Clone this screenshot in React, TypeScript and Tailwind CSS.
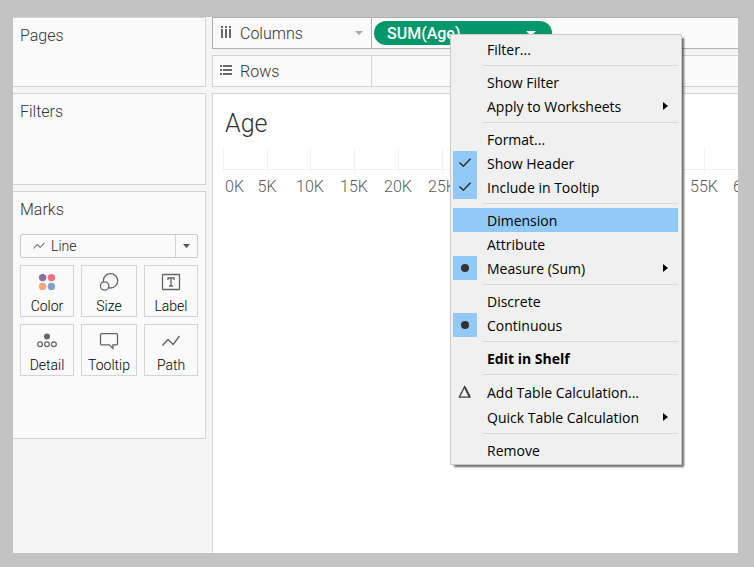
import type { ReactNode } from "react";

const CheckMark = () => (
  <svg width="14" height="12" viewBox="0 0 14 12" fill="none" stroke="#333" strokeWidth="1.6" aria-hidden="true">
    <path d="M1.5 5.5 5.3 9.2 12.5 1.8" />
  </svg>
);

const Dot = () => (
  <svg width="8" height="8" viewBox="0 0 8 8" aria-hidden="true">
    <circle cx="4" cy="4" r="4" fill="#333" />
  </svg>
);

const Delta = () => (
  <svg width="14" height="14" viewBox="0 0 14 14" fill="none" stroke="#404040" aria-hidden="true">
    <path d="M6.5 1.8 1.3 12.2H11.8Z" strokeWidth="1.3" />
    <path d="M6.8 1.8 11.8 12" strokeWidth="1.9" />
  </svg>
);

type Entry = {
  label: string;
  mark?: "check" | "dot" | "delta";
  submenu?: boolean;
  active?: boolean;
  bold?: boolean;
  tall?: boolean;
};

const menuGroups: Entry[][] = [
  [{ label: "Filter..." }],
  [{ label: "Show Filter" }, { label: "Apply to Worksheets", submenu: true }],
  [
    { label: "Format..." },
    { label: "Show Header", mark: "check" },
    { label: "Include in Tooltip", mark: "check" },
  ],
  [
    { label: "Dimension", active: true },
    { label: "Attribute" },
    { label: "Measure (Sum)", mark: "dot", submenu: true },
  ],
  [{ label: "Discrete" }, { label: "Continuous", mark: "dot" }],
  [{ label: "Edit in Shelf", bold: true }],
  [
    { label: "Add Table Calculation...", mark: "delta", tall: true },
    { label: "Quick Table Calculation", submenu: true },
  ],
  [{ label: "Remove" }],
];

function MenuRow({ label, mark, submenu, active, bold, tall }: Entry) {
  const selected = mark === "check" || mark === "dot";
  return (
    <button
      type="button"
      role="menuitem"
      className={`flex w-full items-center text-left ${tall ? "h-[26px]" : "h-6"} ${active ? "bg-[#91c9f7]" : ""} ${bold ? "font-bold" : "font-normal"}`}
    >
      <span className={`flex h-6 w-6 items-center justify-center ${selected ? "bg-[#91c9f7]" : ""}`}>
        {mark === "check" && <CheckMark />}
        {mark === "dot" && <Dot />}
        {mark === "delta" && <Delta />}
      </span>
      <span className="flex-1 pt-0.5 pl-2.5">{label}</span>
      {submenu && (
        <svg width="5" height="8" viewBox="0 0 5 8" className="mr-2.5" aria-hidden="true">
          <path d="M0 0 5 4 0 8Z" fill="#000" />
        </svg>
      )}
    </button>
  );
}

function ContextMenu() {
  return (
    <div
      role="menu"
      className="absolute top-[13px] left-[76px] z-10 w-[232px] border border-[#cccccc] bg-[#f0f0f0] py-0.5 pr-[3px] pl-0.5 font-['Open_Sans',sans-serif] text-sm whitespace-nowrap text-black shadow-[3px_3px_2px_-1px_rgba(0,0,0,0.6)]"
    >
      {menuGroups.map((group, i) => (
        <div key={group[0].label}>
          {i > 0 && <div role="separator" className="my-1 ml-[30px] h-px bg-[#d7d7d7]" />}
          {group.map((entry) => (
            <MenuRow key={entry.label} {...entry} />
          ))}
        </div>
      ))}
    </div>
  );
}

function Card({ title, className, children }: { title: string; className: string; children?: ReactNode }) {
  return (
    <section className={`border-y border-r border-[#d4d4d4] bg-[#fafafa] px-[7px] pt-1.5 ${className}`}>
      <h2 className="text-base leading-6">{title}</h2>
      {children}
    </section>
  );
}

const markButtons: { label: string; icon: ReactNode }[] = [
  {
    label: "Color",
    icon: (
      <>
        <circle cx="5.6" cy="5.6" r="3.7" fill="#86709b" />
        <circle cx="14.4" cy="5.6" r="3.7" fill="#fa6e7f" />
        <circle cx="5.6" cy="14.4" r="3.7" fill="#f4a676" />
        <circle cx="14.4" cy="14.4" r="3.7" fill="#7ba3cc" />
      </>
    ),
  },
  {
    label: "Size",
    icon: (
      <g fill="#fafafa" stroke="#666" strokeWidth="1.3">
        <circle cx="11.5" cy="8.8" r="7.2" />
        <circle cx="5.6" cy="14" r="4.2" />
      </g>
    ),
  },
  {
    label: "Label",
    icon: (
      <>
        <rect x="1.5" y="2.5" width="17" height="15" rx="0.5" fill="none" stroke="#666" strokeWidth="1.3" />
        <path d="M7 8V6h6v2M10 6v8M8 14h4" fill="none" stroke="#666" strokeWidth="1.3" />
      </>
    ),
  },
  {
    label: "Detail",
    icon: (
      <>
        <circle cx="10" cy="5.5" r="3" fill="#666" />
        <g fill="none" stroke="#666" strokeWidth="1.2">
          <circle cx="3.1" cy="13.3" r="2.4" />
          <circle cx="10" cy="13.3" r="2.4" />
          <circle cx="16.9" cy="13.3" r="2.4" />
        </g>
      </>
    ),
  },
  {
    label: "Tooltip",
    icon: (
      <path
        d="M2.5 2.6h15q1 0 1 1v9.2q0 1-1 1h-3.6v3.6l-3.6-3.6H2.5q-1 0-1-1V3.6q0-1 1-1Z"
        fill="none"
        stroke="#666"
        strokeWidth="1.3"
      />
    ),
  },
  {
    label: "Path",
    icon: <path d="M1.5 14.500 7 8.500 12.200 13.500 18.500 5" fill="none" stroke="#666" strokeWidth="1.4" />,
  },
];

function Shelf({ name, icon, active, children }: { name: string; icon: ReactNode; active?: boolean; children?: ReactNode }) {
  return (
    <div className={`flex h-8 border-y border-l bg-[#fafafa] ${active ? "border-[#b0b0b0]" : "border-[#d4d4d4]"}`}>
      <div className={`flex w-[159px] items-center border-r pr-2 pl-[7px] ${active ? "border-[#b0b0b0]" : "border-[#d4d4d4]"}`}>
        <svg width="13" height="12" viewBox="0 0 13 12" fill="#666" className="mb-0.5" aria-hidden="true">
          {icon}
        </svg>
        <span className="flex-1 pt-0.5 pl-[7px]">{name}</span>
        {active && (
          <svg width="8" height="4" viewBox="0 0 8 4" aria-hidden="true">
            <path d="M0 0h8L4 4Z" fill="#aaa" />
          </svg>
        )}
      </div>
      <div className="flex flex-1 items-center pl-0.5">{children}</div>
    </div>
  );
}

const ticks = [
  { x: 10, label: "0K" },
  { x: 54, label: "5K" },
  { x: 97, label: "10K" },
  { x: 141, label: "15K" },
  { x: 185, label: "20K" },
  { x: 229, label: "25K" },
  { x: 272, label: "30K" },
  { x: 316, label: "35K" },
  { x: 360, label: "40K" },
  { x: 403, label: "45K" },
  { x: 447, label: "50K" },
  { x: 491, label: "55K" },
  { x: 534, label: "60K" },
];

function Axis() {
  return (
    <svg className="h-[50px] w-full" aria-label="Age axis">
      <rect x="10" y="20" width="100%" height="1" fill="#f0f0f0" />
      {ticks.map(({ x, label }) => (
        <g key={label}>
          <rect x={x} y="0" width="1" height="24" fill="#f0f0f0" />
          <text
            x={label === "0K" ? 12 : x}
            y="43"
            textAnchor={label === "0K" ? "start" : "middle"}
            className="fill-[#5a5a5a] text-base"
          >
            {label}
          </text>
        </g>
      ))}
    </svg>
  );
}

export default function App() {
  return (
    <div className="flex min-h-screen bg-[#c3c3c3] pt-[17px] pr-4 pb-3.5 pl-[13px] font-['Roboto',sans-serif] font-light text-[#333]">
      <div className="flex min-w-0 flex-1 gap-1.5 bg-[#f5f5f5]">
        <aside className="flex w-[193px] shrink-0 flex-col gap-1.5">
          <Card title="Pages" className="h-[70px]" />
          <Card title="Filters" className="h-[92px]" />
          <Card title="Marks" className="h-[248px]">
            <div className="relative mt-3 h-6 text-sm">
              <select
                aria-label="Mark type"
                className="h-full w-full appearance-none rounded-xs border border-[#cccccc] bg-transparent pl-[30px] leading-5 text-[#222]"
              >
                <option>Line</option>
              </select>
              <svg width="12" height="8" viewBox="0 0 12 8" className="pointer-events-none absolute top-2 left-[13px]" aria-hidden="true">
                <path d="M.6 6.500 4.200 2.500 7.200 5.500 11.400.8" fill="none" stroke="#777" strokeWidth="1.1" />
              </svg>
              <span className="pointer-events-none absolute inset-y-px right-px flex w-[22px] items-center justify-center border-l border-[#d4d4d4]">
                <svg width="7" height="4" viewBox="0 0 7 4" aria-hidden="true">
                  <path d="M0 0h7L3.500 4Z" fill="#555" />
                </svg>
              </span>
            </div>
            <div className="mt-[7px] grid grid-cols-[54fr_56fr_54fr] gap-[7px]">
              {markButtons.map(({ label, icon }) => (
                <button
                  key={label}
                  type="button"
                  className="flex h-[52px] flex-col items-center justify-between border border-[#d4d4d4] pt-1.5 text-sm leading-5 text-black"
                >
                  <svg width="20" height="20" viewBox="0 0 20 20" aria-hidden="true">
                    {icon}
                  </svg>
                  {label}
                </button>
              ))}
            </div>
          </Card>
        </aside>

        <main className="flex min-w-0 flex-1 flex-col gap-1.5">
          <Shelf
            name="Columns"
            active
            icon={<path d="M1 0h2v2H1zM5 0h2v2h-2zM9 0h2v2h-2zM1 3h2v9H1zM5 3h2v9h-2zM9 3h2v9h-2z" />}
          >
            <div className="relative">
              <button
                type="button"
                aria-haspopup="menu"
                className="flex h-6 w-[178px] items-center justify-between rounded-full bg-[#00986a] pr-4 pl-[13px] font-medium text-white"
              >
                <span className="pt-0.5">SUM(Age)</span>
                <svg width="10" height="5" viewBox="0 0 10 5" aria-hidden="true">
                  <path d="M0 0h10L5 5Z" fill="#fff" />
                </svg>
              </button>
              <ContextMenu />
            </div>
          </Shelf>
          <Shelf
            name="Rows"
            icon={<path d="M0 1h2v2H0zM3 1h9v2H3zM0 5h2v2H0zM3 5h9v2H3zM0 9h2v2H0zM3 9h9v2H3z" />}
          />
          <section className="flex-1 overflow-hidden border-t border-l border-[#d4d4d4] bg-white">
            <h1 className="pt-3 pl-3 text-[25px] leading-9">Age</h1>
            <div className="mt-[7px]">
              <Axis />
            </div>
          </section>
        </main>
      </div>
    </div>
  );
}
